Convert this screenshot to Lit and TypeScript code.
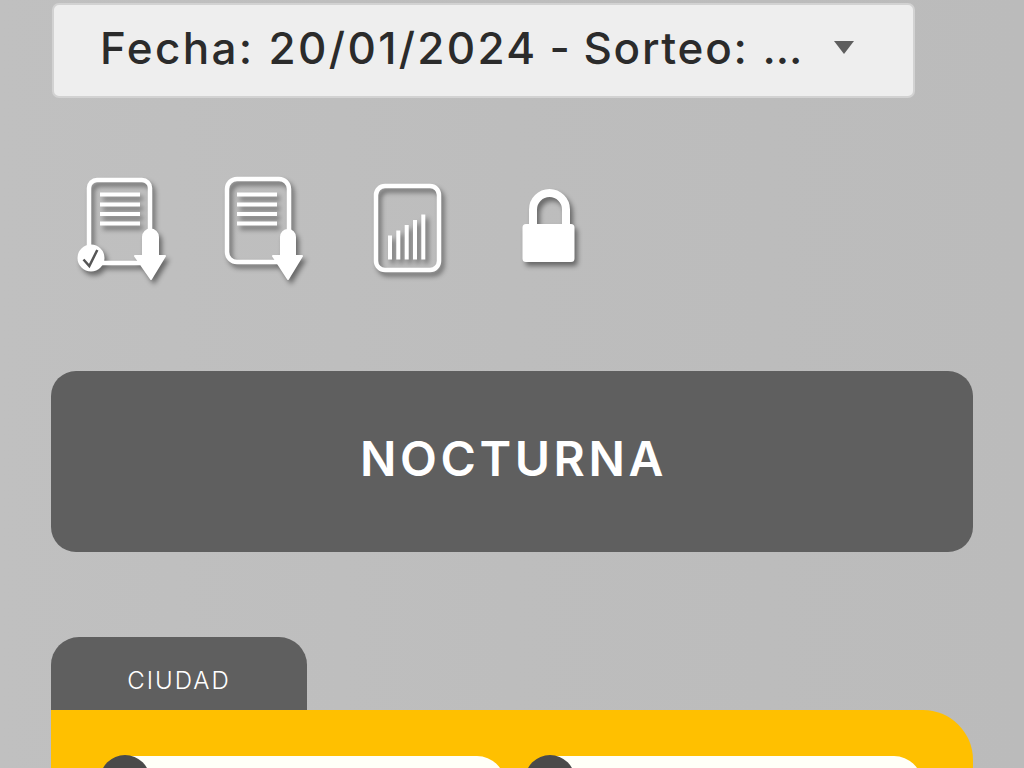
import { LitElement, html, css } from "lit";
import { customElement } from "lit/decorators.js";

@customElement("app-root")
export class AppRoot extends LitElement {
  static styles = css`
    :host {
      display: block;
      height: 768px;
      overflow: hidden;
      font-family: Inter, "Noto Sans", sans-serif;
      background: linear-gradient(90deg, #c0c0c0 0%, #bdbdbd 50%, #bbbbbb 100%);
    }
    .page { padding: 3px 51px 0; }
    .page-tight { padding: 0 51px; }
    .select {
      box-sizing: border-box;
      width: 863px;
      height: 95px;
      margin-left: 1px;
      display: flex;
      align-items: center;
      padding-left: 46px;
      background: #eeeeee;
      border: 2px solid #d2d2d2;
      border-radius: 7px;
      color: #2b2b2b;
      font-size: 44px;
      font-weight: 500;
      letter-spacing: 1.7px;
    }
    .select-text { white-space: pre; width: 703px; flex: none; margin-top: -6px; }
    .date { letter-spacing: 2.35px; }
    .rest { word-spacing: -1.5px; }
    .dots { letter-spacing: 0; margin-left: 2px; }
    .caret {
      width: 0;
      height: 0;
      margin: -7px 0 0 31px;
      border-left: 10.5px solid transparent;
      border-right: 10.5px solid transparent;
      border-top: 13px solid #5e5e5e;
    }
    .icons { display: flex; gap: 36px; margin: 72px 0 0 19px; }
    .icons svg {
      flex: none;
      width: 110px;
      height: 120px;
      filter: drop-shadow(3px 4px 2.5px rgba(0, 0, 0, 0.45));
    }
    .line { fill: none; stroke: #fff; stroke-width: 4.5; }
    .row { fill: none; stroke: #fff; stroke-width: 4; }
    .shackle { fill: none; stroke: #fff; stroke-width: 8; }
    .solid { fill: #fff; stroke: #fff; stroke-width: 2; stroke-linejoin: round; }
    .banner {
      margin-top: 81px;
      height: 181px;
      box-sizing: border-box;
      padding: 0 0 6px 3px;
      border-radius: 25px;
      background: #5f5f5f;
      color: #fff;
      display: flex;
      align-items: center;
      justify-content: center;
      font-size: 48px;
      font-weight: 600;
      letter-spacing: 3.6px;
    }
    .tab {
      margin-top: 85px;
      width: 256px;
      height: 73px;
      box-sizing: border-box;
      padding-top: 14px;
      border-radius: 28px 28px 0 0;
      background: #5f5f5f;
      color: #fff;
      display: flex;
      align-items: center;
      justify-content: center;
      font-size: 24px;
      font-weight: 300;
      letter-spacing: 2px;
    }
    .card {
      background: #ffc000;
      border-radius: 0 50px 0 0;
      padding: 45px 51px 60px 49px;
      display: grid;
      grid-template-columns: 405px 397px;
      column-gap: 20px;
    }
    .pill { display: flex; }
    .num { flex: none; width: 50px; height: 50px; border-radius: 50%; background: #4a4a4a; z-index: 1; }
    .bar { flex: 1; height: 70px; margin: 1px 0 0 -25px; background: #fffff8; border-radius: 0 28px 28px 0; }
  `;

  render() {
    return html`
      <div class="page">
        <div class="select">
          <span class="select-text"><span class="date">Fecha: 20/01/2024</span><span class="rest"> - Sorteo: </span><span class="dots">...</span></span>
          <span class="caret"></span>
        </div>
        <div class="icons">
          <svg viewBox="70 170 110 120" aria-label="Descargar verificado">
            <path class="line" d="M89 250V188a8 8 0 0 1 8-8h45a8 8 0 0 1 8 8v42M100 263h40" />
            <path class="row" d="M100 194.500h40M100 204.500h40M100 214h40M100 223.500h40" />
            <path class="solid" d="M143 237a7.500 7.500 0 0 1 15 0v19h7l-14 23-16-23h8z" />
            <circle class="solid" cx="91" cy="258" r="12.500" />
            <path d="M83.500 259.500l5.800 6.500 8-16" fill="none" stroke="#555" stroke-width="2.500" />
          </svg>
          <svg viewBox="216 170 110 120" aria-label="Descargar">
            <path class="line" d="M279 262h-42a10 10 0 0 1-10-10v-63a10 10 0 0 1 10-10h42a10 10 0 0 1 10 10v42" />
            <path class="row" d="M237 194.500h40M237 204.500h40M237 214h40M237 223.500h40" />
            <path class="solid" d="M281 237a7 7 0 0 1 14 0v19h7l-14 23-15-23h8z" />
          </svg>
          <svg viewBox="362 170 110 120" aria-label="Estadísticas">
            <rect class="line" x="376" y="186" width="63" height="84" rx="9" />
            <path class="row" d="M390 259.500v-24M398.300 259.500v-29M406.700 259.500v-34.500M415 259.500v-39.500M423.300 259.500v-45" />
          </svg>
          <svg viewBox="508 170 110 120" aria-label="Bloqueado">
            <path class="shackle" d="M533 226v-16.500a16.500 16.500 0 0 1 33 0V226" />
            <rect class="solid" x="523.500" y="225" width="50" height="36" rx="2.500" />
          </svg>
        </div>
        <div class="banner">NOCTURNA</div>
        <div class="tab">CIUDAD</div>
      </div>
      <div class="page-tight">
        <div class="card">
          <div class="pill"><span class="num"></span><span class="bar"></span></div>
          <div class="pill"><span class="num"></span><span class="bar"></span></div>
        </div>
      </div>
    `;
  }
}
